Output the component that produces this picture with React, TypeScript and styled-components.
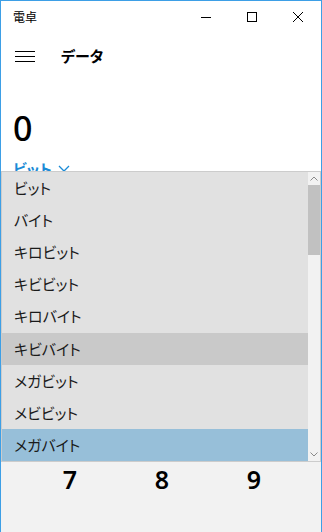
import styled, { createGlobalStyle } from "styled-components";

const GlobalStyle = createGlobalStyle`
  html, body {
    margin: 0;
    padding: 0;
    background: #ffffff;
  }
  body {
    font-family: "Noto Sans CJK JP", "Noto Sans", sans-serif;
    font-feature-settings: "palt";
    color: #000;
  }
`;

const units = [
  "ビット",
  "バイト",
  "キロビット",
  "キビビット",
  "キロバイト",
  "キビバイト",
  "メガビット",
  "メビビット",
  "メガバイト",
];

const hoverIndex = 5;
const selectedIndex = 8;

export default function App() {
  return (
    <>
      <GlobalStyle />
      <Window>
        <TitleBar>
          <AppTitle>電卓</AppTitle>
          <Controls>
            <ControlButton>
              <svg width="10" height="10" viewBox="0 0 10 10">
                <line x1="0" y1="5.5" x2="10" y2="5.5" stroke="#000" strokeWidth="1" />
              </svg>
            </ControlButton>
            <ControlButton>
              <svg width="10" height="10" viewBox="0 0 10 10">
                <rect x="0.5" y="0.5" width="9" height="9" fill="none" stroke="#000" strokeWidth="1" />
              </svg>
            </ControlButton>
            <ControlButton>
              <svg width="10" height="10" viewBox="0 0 10 10">
                <path d="M0 0 L10 10 M10 0 L0 10" stroke="#000" strokeWidth="1" />
              </svg>
            </ControlButton>
          </Controls>
        </TitleBar>

        <NavBar>
          <Hamburger>
            <span />
            <span />
            <span />
          </Hamburger>
          <NavTitle>データ</NavTitle>
        </NavBar>

        <Display>
          <Value>0</Value>
          <UnitPicker>
            ビット
            <svg width="12" height="8" viewBox="0 0 12 8">
              <path d="M1 1 L6 6 L11 1" fill="none" stroke="#1b8bd6" strokeWidth="1.3" />
            </svg>
          </UnitPicker>
        </Display>

        <Keypad>
          <Key>7</Key>
          <Key>8</Key>
          <Key>9</Key>
        </Keypad>

        <Dropdown>
          <List>
            {units.map((u, i) => (
              <Item
                key={u}
                $state={i === selectedIndex ? "selected" : i === hoverIndex ? "hover" : "normal"}
              >
                {u}
              </Item>
            ))}
          </List>
          <ScrollBar>
            <ScrollArrow>
              <svg width="8" height="5" viewBox="0 0 8 5">
                <path d="M0.5 4.5 L4 1 L7.5 4.5" fill="none" stroke="#8a8a8a" strokeWidth="1" />
              </svg>
            </ScrollArrow>
            <Track>
              <Thumb />
            </Track>
            <ScrollArrow>
              <svg width="8" height="5" viewBox="0 0 8 5">
                <path d="M0.5 0.5 L4 4 L7.5 0.5" fill="none" stroke="#8a8a8a" strokeWidth="1" />
              </svg>
            </ScrollArrow>
          </ScrollBar>
        </Dropdown>
      </Window>
    </>
  );
}

const Window = styled.div`
  position: relative;
  width: 322px;
  height: 532px;
  box-sizing: border-box;
  border: 1px solid #3d9fe6;
  border-bottom: none;
  background: #ffffff;
  display: flex;
  flex-direction: column;
  overflow: hidden;
`;

const TitleBar = styled.div`
  height: 31px;
  flex-shrink: 0;
  display: flex;
  align-items: center;
  justify-content: space-between;
`;

const AppTitle = styled.div`
  font-size: 12px;
  padding-left: 12px;
  line-height: 1;
`;

const Controls = styled.div`
  display: flex;
  height: 100%;
`;

const ControlButton = styled.div`
  width: 46px;
  height: 100%;
  display: flex;
  align-items: center;
  justify-content: center;
`;

const NavBar = styled.div`
  height: 48px;
  flex-shrink: 0;
  display: flex;
  align-items: center;
`;

const Hamburger = styled.div`
  width: 20px;
  margin-left: 14px;
  display: flex;
  flex-direction: column;
  gap: 4px;

  span {
    display: block;
    height: 1px;
    background: #000;
  }
`;

const NavTitle = styled.div`
  margin-left: 26px;
  font-size: 15px;
  font-weight: 600;
  margin-top: -2px;
`;

const Display = styled.div`
  padding: 26px 12px 0;
  flex-shrink: 0;
  display: flex;
  flex-direction: column;
`;

const Value = styled.div`
  font-family: "Noto Sans", sans-serif;
  font-size: 34px;
  font-weight: 500;
  line-height: 44px;
`;

const UnitPicker = styled.div`
  display: flex;
  align-items: center;
  gap: 6px;
  color: #1b8bd6;
  font-size: 15px;
  font-weight: 700;
  margin-top: 8px;
`;

const Keypad = styled.div`
  flex: 1;
  background: #f2f2f2;
  display: grid;
  grid-template-columns: repeat(3, 92px);
  grid-auto-rows: 70px;
  padding-left: 23px;
  align-content: end;
  padding-bottom: 18px;
`;

const Key = styled.div`
  display: flex;
  align-items: center;
  justify-content: center;
  font-family: "Noto Sans", sans-serif;
  font-size: 25px;
  font-weight: 600;
`;

const Dropdown = styled.div`
  position: absolute;
  top: 170px;
  left: 0;
  right: 0;
  height: 291px;
  box-sizing: border-box;
  border: 1px solid #cccccc;
  background: #e1e1e1;
  display: flex;
`;

const List = styled.div`
  flex: 1;
  display: flex;
  flex-direction: column;
`;

const Item = styled.div<{ $state: "normal" | "hover" | "selected" }>`
  height: 32px;
  display: flex;
  align-items: center;
  padding-left: 12px;
  padding-bottom: 1px;
  font-size: 15px;
  color: #1a1a1a;
  background: ${(p) =>
    p.$state === "selected" ? "#97bfd9" : p.$state === "hover" ? "#c9c9c9" : "#e1e1e1"};
`;

const ScrollBar = styled.div`
  width: 12px;
  background: #f2f2f2;
  display: flex;
  flex-direction: column;
`;

const ScrollArrow = styled.div`
  height: 13px;
  display: flex;
  align-items: center;
  justify-content: center;
`;

const Track = styled.div`
  flex: 1;
`;

const Thumb = styled.div`
  height: 70px;
  background: #c1c1c1;
`;
